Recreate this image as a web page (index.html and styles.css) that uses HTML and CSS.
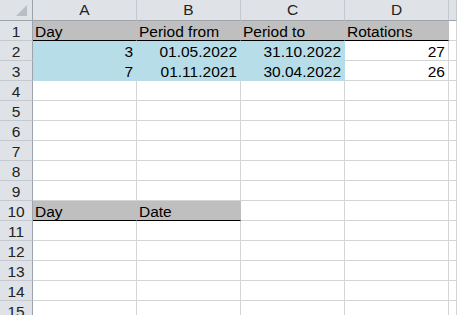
FILE: index.html
```html
<!DOCTYPE html>
<html lang="en">
<head>
    <meta charset="UTF-8">
    <meta name="viewport" content="width=device-width, initial-scale=1.0">
    <title>Rotations</title>
    <link rel="stylesheet" href="styles.css">
</head>
<body>
    <div class="sheet">
        <div class="row head">
            <div class="cell corner">
                <svg width="11" height="11" viewBox="0 0 11 11"><polygon points="11,0 11,11 0,11" fill="#b9bec4"/></svg>
            </div>
            <div class="cell ch">A</div>
            <div class="cell ch">B</div>
            <div class="cell ch">C</div>
            <div class="cell ch">D</div>
            <div class="cell ch"></div>
        </div>
        <div class="row">
            <div class="cell rh">1</div>
            <div class="cell gray">Day</div>
            <div class="cell gray">Period from</div>
            <div class="cell gray">Period to</div>
            <div class="cell gray">Rotations</div>
            <div class="cell"></div>
        </div>
        <div class="row">
            <div class="cell rh">2</div>
            <div class="cell blue num">3</div>
            <div class="cell blue num">01.05.2022</div>
            <div class="cell blue num">31.10.2022</div>
            <div class="cell num">27</div>
            <div class="cell"></div>
        </div>
        <div class="row">
            <div class="cell rh">3</div>
            <div class="cell blue num">7</div>
            <div class="cell blue num">01.11.2021</div>
            <div class="cell blue num">30.04.2022</div>
            <div class="cell num">26</div>
            <div class="cell"></div>
        </div>
        <div class="row">
            <div class="cell rh">4</div>
            <div class="cell"></div><div class="cell"></div><div class="cell"></div><div class="cell"></div><div class="cell"></div>
        </div>
        <div class="row">
            <div class="cell rh">5</div>
            <div class="cell"></div><div class="cell"></div><div class="cell"></div><div class="cell"></div><div class="cell"></div>
        </div>
        <div class="row">
            <div class="cell rh">6</div>
            <div class="cell"></div><div class="cell"></div><div class="cell"></div><div class="cell"></div><div class="cell"></div>
        </div>
        <div class="row">
            <div class="cell rh">7</div>
            <div class="cell"></div><div class="cell"></div><div class="cell"></div><div class="cell"></div><div class="cell"></div>
        </div>
        <div class="row">
            <div class="cell rh">8</div>
            <div class="cell"></div><div class="cell"></div><div class="cell"></div><div class="cell"></div><div class="cell"></div>
        </div>
        <div class="row">
            <div class="cell rh">9</div>
            <div class="cell"></div><div class="cell"></div><div class="cell"></div><div class="cell"></div><div class="cell"></div>
        </div>
        <div class="row">
            <div class="cell rh">10</div>
            <div class="cell gray">Day</div>
            <div class="cell gray">Date</div>
            <div class="cell"></div><div class="cell"></div><div class="cell"></div>
        </div>
        <div class="row">
            <div class="cell rh">11</div>
            <div class="cell"></div><div class="cell"></div><div class="cell"></div><div class="cell"></div><div class="cell"></div>
        </div>
        <div class="row">
            <div class="cell rh">12</div>
            <div class="cell"></div><div class="cell"></div><div class="cell"></div><div class="cell"></div><div class="cell"></div>
        </div>
        <div class="row">
            <div class="cell rh">13</div>
            <div class="cell"></div><div class="cell"></div><div class="cell"></div><div class="cell"></div><div class="cell"></div>
        </div>
        <div class="row">
            <div class="cell rh">14</div>
            <div class="cell"></div><div class="cell"></div><div class="cell"></div><div class="cell"></div><div class="cell"></div>
        </div>
        <div class="row">
            <div class="cell rh">15</div>
            <div class="cell"></div><div class="cell"></div><div class="cell"></div><div class="cell"></div><div class="cell"></div>
        </div>
    </div>
</body>
</html>
```

FILE: styles.css
```css
* {
    margin: 0;
    padding: 0;
    box-sizing: border-box;
}

body {
    font-family: "Liberation Sans", Arial, sans-serif;
    font-size: 15.5px;
    color: #000;
    background-color: #fff;
    overflow: hidden;
}

.sheet {
    width: 457px;
    height: 315px;
    overflow: hidden;
}

.row {
    display: grid;
    grid-template-columns: 33px 104px 104px 104px 104px 1fr;
    height: 20px;
}

.row.head {
    height: 21px;
}

.cell {
    border-right: 1px solid #d4d4d4;
    border-bottom: 1px solid #d4d4d4;
    padding: 2px 3px 0 2px;
    line-height: 17px;
    white-space: nowrap;
}

.num {
    text-align: right;
}

.corner {
    display: flex;
    justify-content: flex-end;
    align-items: flex-end;
    padding: 0 5px 4px 0;
    background-color: #dfe3e8;
    border-right-color: #9da3aa;
    border-bottom-color: #9da3aa;
}

.ch {
    background-color: #dfe3e8;
    border-right-color: #c4c9cf;
    border-bottom-color: #9da3aa;
    color: #222;
    text-align: center;
    line-height: 20px;
    padding: 0;
}

.rh {
    background-color: #dfe3e8;
    border-right-color: #9da3aa;
    border-bottom-color: #c4c9cf;
    color: #222;
    text-align: center;
    padding: 2px 0 0;
}

.gray {
    background-color: #bfbfbf;
    border-right-color: #bfbfbf;
    border-bottom-color: #000;
}

.blue {
    background-color: #b7dee8;
    border-right-color: #b7dee8;
    border-bottom-color: #b7dee8;
}
```
